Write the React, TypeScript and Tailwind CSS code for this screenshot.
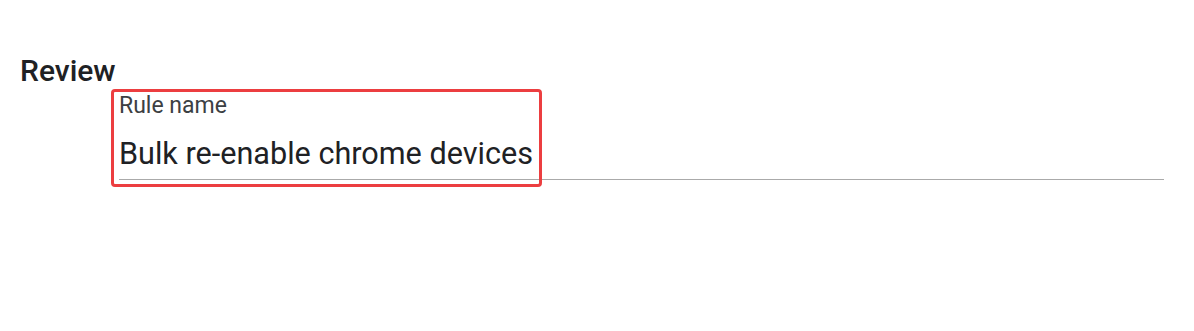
export default function App() {
  return (
    <div className="w-[1194px] h-[331px] bg-white font-['Roboto',sans-serif] pt-[53px] pl-5 pr-[30px]">
      <h2 className="text-[30px] leading-[36px] font-medium text-[#202124]">Review</h2>
      <div className="relative ml-[99px]">
        <div className="text-[23px] leading-[28px] text-[#3c4043] pt-[3px]">Rule name</div>
        <div className="text-[30.6px] leading-[36px] text-[#202124] mt-[16px] pb-[7px] border-b border-[#aaaaaa]">
          Bulk re-enable chrome devices
        </div>
        <div className="absolute left-[-8px] top-0 w-[431px] h-[98px] border-[3px] border-[#ec3e40] rounded-[4px]" />
      </div>
    </div>
  );
}
